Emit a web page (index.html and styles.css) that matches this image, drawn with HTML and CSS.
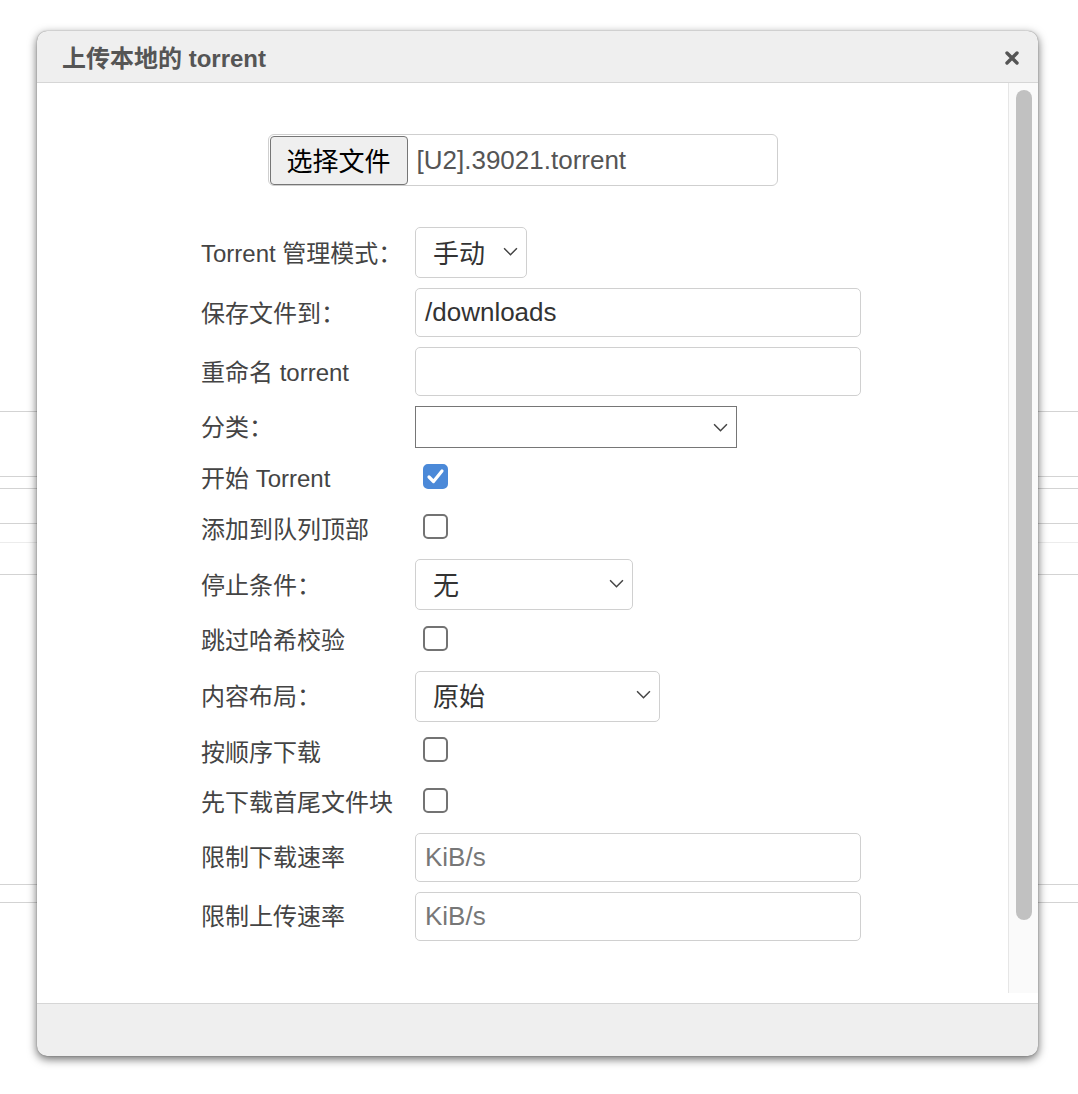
FILE: index.html
```html
<!DOCTYPE html>
<html lang="zh-CN">
<head>
  <meta charset="UTF-8">
  <title>上传本地的 torrent</title>
  <link rel="stylesheet" href="styles.css">
</head>
<body>

  <!-- page behind the dialog -->
  <div class="bg-table">
    <div class="bg-row h65"></div>
    <div class="bg-row h12"></div>
    <div class="bg-row h35"></div>
    <div class="bg-row h19"></div>
    <div class="bg-row h32 light"></div>
    <div class="bg-row h310"></div>
    <div class="bg-row h18"></div>
    <div class="bg-row h40"></div>
  </div>

  <!-- UPLOAD DIALOG -->
  <div class="dialog">
    <div class="dialog-title">
      <span>上传本地的 torrent</span>
      <svg class="close" width="14" height="14" viewBox="0 0 14 14">
        <path d="M2 2 L12 12 M12 2 L2 12" stroke="#555" stroke-width="3.4" stroke-linecap="round"/>
      </svg>
    </div>

    <div class="dialog-body">
      <div class="content">
        <div class="file-box">
          <button class="file-btn">选择文件</button>
          <span class="file-name">[U2].39021.torrent</span>
        </div>

        <div class="form">
          <div class="row">
            <label>Torrent 管理模式：</label>
            <div class="select w112">手动<svg class="chev" viewBox="0 0 14 8"><path d="M1 1 L7 7 L13 1"/></svg></div>
          </div>
          <div class="row">
            <label>保存文件到：</label>
            <div class="text-input">/downloads</div>
          </div>
          <div class="row">
            <label>重命名 torrent</label>
            <div class="text-input"></div>
          </div>
          <div class="row">
            <label>分类：</label>
            <div class="select plain"><svg class="chev" viewBox="0 0 14 8"><path d="M1 1 L7 7 L13 1"/></svg></div>
          </div>
          <div class="row check-row">
            <label>开始 Torrent</label>
            <span class="check checked">
              <svg viewBox="0 0 25 25"><path d="M6 13 L10.5 17.5 L19 7" fill="none" stroke="#fff" stroke-width="3.2" stroke-linecap="round" stroke-linejoin="round"/></svg>
            </span>
          </div>
          <div class="row check-row">
            <label>添加到队列顶部</label>
            <span class="check"></span>
          </div>
          <div class="row">
            <label>停止条件：</label>
            <div class="select w218">无<svg class="chev" viewBox="0 0 14 8"><path d="M1 1 L7 7 L13 1"/></svg></div>
          </div>
          <div class="row check-row">
            <label>跳过哈希校验</label>
            <span class="check"></span>
          </div>
          <div class="row">
            <label>内容布局：</label>
            <div class="select w245">原始<svg class="chev" viewBox="0 0 14 8"><path d="M1 1 L7 7 L13 1"/></svg></div>
          </div>
          <div class="row check-row">
            <label>按顺序下载</label>
            <span class="check"></span>
          </div>
          <div class="row check-row">
            <label>先下载首尾文件块</label>
            <span class="check"></span>
          </div>
          <div class="row">
            <label>限制下载速率</label>
            <div class="text-input placeholder">KiB/s</div>
          </div>
          <div class="row">
            <label>限制上传速率</label>
            <div class="text-input placeholder">KiB/s</div>
          </div>
        </div>
      </div>

      <!-- scrollbar -->
      <div class="scrollbar">
        <div class="thumb"></div>
      </div>
    </div>

    <div class="dialog-footer"></div>
  </div>

</body>
</html>
```

FILE: styles.css
```css
body {
  margin: 0;
  background: #fff;
  font-family: "Liberation Sans", "Noto Sans CJK SC", sans-serif;
  color: #444;
}

/* page table lines behind the dialog */
.bg-table {
  padding-top: 411px;
}

.bg-row {
  border-top: 1px solid #d3d3d3;
}

.bg-row.light {
  border-top-color: #ececec;
}

.h65 { height: 64px; }
.h12 { height: 11px; }
.h35 { height: 34px; }
.h19 { height: 18px; }
.h32 { height: 31px; }
.h310 { height: 309px; }
.h18 { height: 17px; }
.h40 { height: 40px; }

/* dialog window */
.dialog {
  position: absolute;
  left: 37px;
  top: 31px;
  width: 1001px;
  height: 1025px;
  display: flex;
  flex-direction: column;
  background: #efefef;
  border-radius: 10px;
  overflow: hidden;
  box-shadow: 0 3px 10px rgba(0, 0, 0, 0.6), 0 0 1px rgba(0, 0, 0, 0.5);
}

.dialog-title {
  height: 51px;
  display: flex;
  align-items: center;
  justify-content: space-between;
  padding: 0 19px 0 25px;
  border-bottom: 1px solid #d6d6d6;
  font-size: 24px;
  font-weight: bold;
  color: #555;
}

.close {
  margin-top: 3px;
}

.dialog-body {
  display: flex;
  background: #fff;
  padding-bottom: 10px;
}

.content {
  flex: 1;
  height: 910px;
  overflow: hidden;
}

.scrollbar {
  width: 29px;
  height: 910px;
  background: #fafafa;
  border-left: 1px solid #e6e6e6;
}

.thumb {
  width: 16px;
  height: 830px;
  margin: 7px 0 0 7px;
  background: #c1c1c1;
  border-radius: 8px;
}

.dialog-footer {
  flex: 1;
  border-top: 1px solid #d6d6d6;
}

/* file picker */
.file-box {
  width: 506px;
  height: 50px;
  margin: 51px auto 0;
  border: 1px solid #cfcfcf;
  border-radius: 6px;
  display: flex;
  align-items: center;
  padding: 0 1px;
}

.file-btn {
  height: 49px;
  padding: 0 16px 2px;
  font-family: "Liberation Sans", "Noto Sans CJK SC", sans-serif;
  font-size: 26px;
  color: #000;
  background: #efefef;
  border: 1px solid #767676;
  border-radius: 4px;
}

.file-name {
  margin-left: 9px;
  font-size: 26px;
  color: #555;
}

/* form rows */
.form {
  margin: 36px 0 0 164px;
}

.row {
  display: flex;
  align-items: center;
  padding: 5px 0;
}

.row label {
  width: 214px;
  flex-shrink: 0;
  font-size: 24px;
  color: #444;
  margin-top: -3px;
}

.check-row {
  min-height: 40.5px;
}

.text-input {
  width: 435px;
  height: 47px;
  padding-left: 9px;
  border: 1px solid #d0d0d0;
  border-radius: 5px;
  font-size: 26px;
  line-height: 47px;
  color: #333;
}

.text-input.placeholder {
  color: #777;
}

.select {
  box-sizing: border-box;
  height: 51px;
  display: flex;
  align-items: center;
  justify-content: space-between;
  padding: 0 8px 3px 17px;
  border: 1px solid #d0d0d0;
  border-radius: 5px;
  font-size: 26px;
  color: #333;
}

.select.plain {
  width: 322px;
  height: 42px;
  padding-bottom: 0;
  border-color: #767676;
  border-radius: 0;
  justify-content: flex-end;
}

.w112 { width: 112px; }
.w218 { width: 218px; }
.w245 { width: 245px; }

.chev {
  width: 15px;
  height: 9px;
  fill: none;
  stroke: #444;
  stroke-width: 1.4;
}

.check {
  box-sizing: border-box;
  width: 25px;
  height: 25px;
  margin: 0 0 4px 8px;
  border: 2px solid #737373;
  border-radius: 5px;
  display: flex;
}

.check.checked {
  background: #4b89d8;
  border-color: #4b89d8;
}

.check.checked svg {
  width: 25px;
  height: 25px;
  margin: -2px;
}
```
